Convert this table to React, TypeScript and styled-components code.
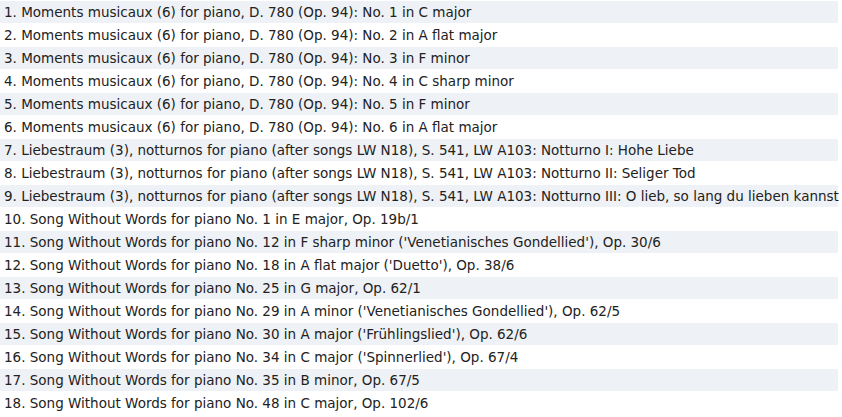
import React from "react";
import styled, { createGlobalStyle } from "styled-components";

const GlobalStyle = createGlobalStyle`
  html, body {
    margin: 0;
    padding: 0;
    background: #ffffff;
  }
`;

const TrackList = styled.ol`
  list-style: none;
  margin: 0;
  padding: 1px 0 0 0;
  width: 838px;
  display: flex;
  flex-direction: column;
  gap: 1px;
  font-family: "DejaVu Sans", Verdana, sans-serif;
  font-size: 13.5px;
  color: #222222;
`;

const TrackRow = styled.li<{ $shaded: boolean }>`
  height: 22px;
  display: flex;
  align-items: center;
  padding-left: 4px;
  white-space: nowrap;
  background: ${(p) => (p.$shaded ? "#eef1f5" : "#ffffff")};
`;

const tracks = [
  "Moments musicaux (6) for piano, D. 780 (Op. 94): No. 1 in C major",
  "Moments musicaux (6) for piano, D. 780 (Op. 94): No. 2 in A flat major",
  "Moments musicaux (6) for piano, D. 780 (Op. 94): No. 3 in F minor",
  "Moments musicaux (6) for piano, D. 780 (Op. 94): No. 4 in C sharp minor",
  "Moments musicaux (6) for piano, D. 780 (Op. 94): No. 5 in F minor",
  "Moments musicaux (6) for piano, D. 780 (Op. 94): No. 6 in A flat major",
  "Liebestraum (3), notturnos for piano (after songs LW N18), S. 541, LW A103: Notturno I: Hohe Liebe",
  "Liebestraum (3), notturnos for piano (after songs LW N18), S. 541, LW A103: Notturno II: Seliger Tod",
  "Liebestraum (3), notturnos for piano (after songs LW N18), S. 541, LW A103: Notturno III: O lieb, so lang du lieben kannst",
  "Song Without Words for piano No. 1 in E major, Op. 19b/1",
  "Song Without Words for piano No. 12 in F sharp minor ('Venetianisches Gondellied'), Op. 30/6",
  "Song Without Words for piano No. 18 in A flat major ('Duetto'), Op. 38/6",
  "Song Without Words for piano No. 25 in G major, Op. 62/1",
  "Song Without Words for piano No. 29 in A minor ('Venetianisches Gondellied'), Op. 62/5",
  "Song Without Words for piano No. 30 in A major ('Frühlingslied'), Op. 62/6",
  "Song Without Words for piano No. 34 in C major ('Spinnerlied'), Op. 67/4",
  "Song Without Words for piano No. 35 in B minor, Op. 67/5",
  "Song Without Words for piano No. 48 in C major, Op. 102/6",
];

export default function App() {
  return (
    <>
      <GlobalStyle />
      <TrackList>
        {tracks.map((t, i) => (
          <TrackRow key={i} $shaded={i % 2 === 0}>
            {i + 1}. {t}
          </TrackRow>
        ))}
      </TrackList>
    </>
  );
}
